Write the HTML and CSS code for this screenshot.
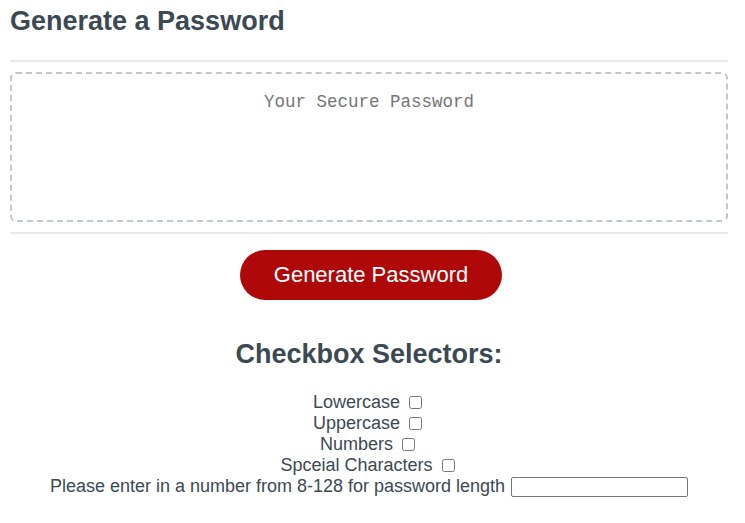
FILE: index.html
```html
<!DOCTYPE html>
<html>
<head>
<meta charset="utf-8">
<link rel="stylesheet" href="styles.css">
</head>
<body>
<div class="wrapper">
  <div class="card">
    <div class="card-header">
      <h2 class="title">Generate a Password</h2>
    </div>
    <div class="card-body">
      <textarea readonly id="password" class="password" placeholder="Your Secure Password" aria-label="Generated Password"></textarea>
    </div>
    <div class="card-footer">
      <button class="btn" type="button">Generate Password</button>
    </div>
  </div>
  <div class="selectors">
    <h2 class="sel-title">Checkbox Selectors:</h2>
    <div class="options">
      <label class="opt">Lowercase <input type="checkbox" class="cb"></label>
      <label class="opt">Uppercase <input type="checkbox" class="cb"></label>
      <label class="opt">Numbers <input type="checkbox" class="cb"></label>
      <label class="opt">Spceial Characters <input type="checkbox" class="cb"></label>
      <label class="opt">Please enter in a number from 8-128 for password length <input type="text" class="len"></label>
    </div>
  </div>
</div>
</body>
</html>
```
FILE: styles.css
```css
*, *::before, *::after { box-sizing: border-box; }
html, body { margin: 0; padding: 0; background: #ffffff; }
body { font-family: "Liberation Sans", Arial, sans-serif; color: #3b4954; }
.wrapper { width: 718px; margin: 0 10px; }
.title {
  margin: 0;
  padding-top: 5px;
  height: 60px;
  font-size: 27px;
  line-height: 32px;
  font-weight: bold;
}
.card-header::after {
  content: "";
  display: block;
  height: 2px;
  background: #e7e9eb;
}
.card-body { padding: 10px 0 10px 0; }
.password {
  display: block;
  width: 100%;
  height: 150px;
  padding: 16px 15px 0 15px;
  border: 2px dashed #c0c7cf;
  border-radius: 6px;
  resize: none;
  overflow: hidden;
  font-family: "Liberation Mono", "DejaVu Sans Mono", monospace;
  font-size: 17.5px;
  line-height: 24px;
  text-align: center;
  color: #3b4954;
  background: #fff;
  outline: none;
}
.password::placeholder { color: #757575; }
.card-footer { text-align: center; }
.card-footer::before {
  content: "";
  display: block;
  height: 2px;
  background: #e7e9eb;
}
.btn {
  border: none;
  background: #af0808;
  border-radius: 25px;
  color: #fff;
  display: inline-block;
  font-family: "Liberation Sans", Arial, sans-serif;
  font-size: 22px;
  line-height: 22px;
  margin: 16px 16px 16px 20px;
  padding: 14px 34px;
}
.selectors { text-align: center; }
.sel-title {
  margin: 22px 0 22px 0;
  font-size: 27px;
  line-height: 32px;
  font-weight: bold;
}
.options { display: flex; flex-direction: column; align-items: center; }
.opt { font-size: 18px; line-height: 21px; display: block; }
.cb { width: 13px; height: 13px; margin: 0 3px 0 4px; vertical-align: -1px; }
.len {
  width: 177px;
  height: 20px;
  margin: 0 0 0 1px;
  border: 1px solid #767676;
  border-radius: 2px;
  vertical-align: middle;
  font-size: 13px;
}
```
